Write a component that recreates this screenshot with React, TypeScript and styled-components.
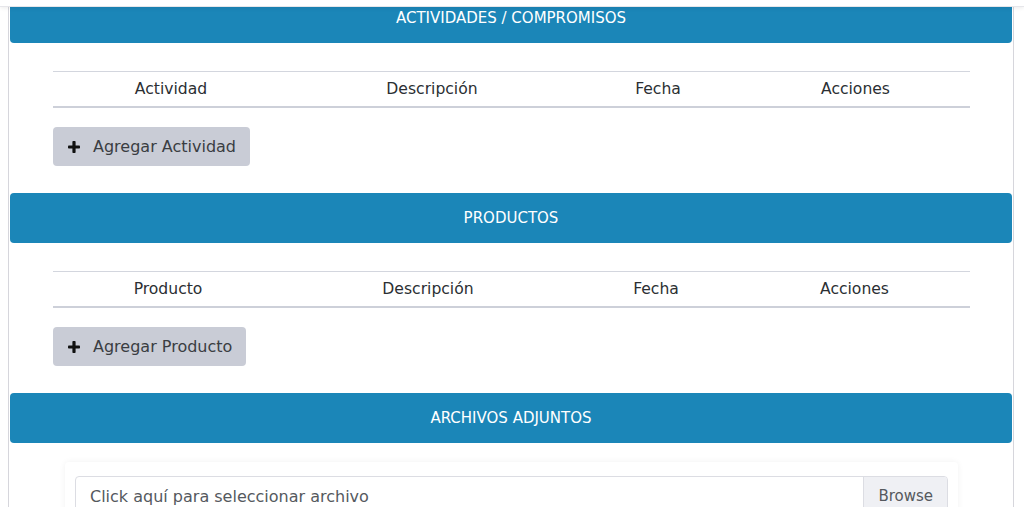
import styled, { createGlobalStyle } from "styled-components";

const GlobalStyle = createGlobalStyle`
  html, body {
    margin: 0;
    padding: 0;
    background: #ffffff;
    font-family: "DejaVu Sans", "Open Sans", sans-serif;
    overflow: hidden;
  }
`;

interface IColumn {
  label: string;
  width: number;
}

interface ISection {
  title: string;
  columns?: IColumn[];
  action?: string;
}

const sections: ISection[] = [
  {
    title: "ACTIVIDADES / COMPROMISOS",
    columns: [
      { label: "Actividad", width: 236 },
      { label: "Descripción", width: 286 },
      { label: "Fecha", width: 166 },
      { label: "Acciones", width: 229 },
    ],
    action: "Agregar Actividad",
  },
  {
    title: "PRODUCTOS",
    columns: [
      { label: "Producto", width: 230 },
      { label: "Descripción", width: 290 },
      { label: "Fecha", width: 166 },
      { label: "Acciones", width: 231 },
    ],
    action: "Agregar Producto",
  },
  { title: "ARCHIVOS ADJUNTOS" },
];

const PlusIcon = () => (
  <svg width="12" height="12" viewBox="0 0 12 12" fill="#111">
    <rect x="4.4" y="0" width="3.2" height="12" rx="0.8" />
    <rect x="0" y="4.4" width="12" height="3.2" rx="0.8" />
  </svg>
);

export default function App() {
  return (
    <>
      <GlobalStyle />
      <TopBar />
      <Page>
        <Card>
          {sections.map((s) => (
            <Section key={s.title}>
              <SectionHeader>{s.title}</SectionHeader>
              {s.columns ? (
                <SectionBody>
                  <TableHead $cols={s.columns.map((c) => `${c.width}px`).join(" ")}>
                    {s.columns.map((c) => (
                      <HeadCell key={c.label}>{c.label}</HeadCell>
                    ))}
                  </TableHead>
                  <AddButton>
                    <PlusIcon />
                    <span>{s.action}</span>
                  </AddButton>
                </SectionBody>
              ) : (
                <FileBody>
                  <FileWrap>
                    <FileInput>
                      <FilePlaceholder>Click aquí para seleccionar archivo</FilePlaceholder>
                      <BrowseButton>Browse</BrowseButton>
                    </FileInput>
                  </FileWrap>
                </FileBody>
              )}
            </Section>
          ))}
        </Card>
      </Page>
    </>
  );
}

const TopBar = styled.div`
  position: fixed;
  top: 0;
  left: 0;
  right: 0;
  height: 6px;
  background: #ffffff;
  border-bottom: 1px solid #e6e6ea;
  box-shadow: 0 1px 4px rgba(0, 0, 0, 0.08);
  z-index: 10;
`;

const Page = styled.div`
  margin-top: -7px;
  padding-left: 8px;
  width: 1006px;
`;

const Card = styled.div`
  border: 1px solid #d6d6dc;
  border-top: none;
  padding: 0 1px;
  min-height: 560px;
`;

const Section = styled.section`
  display: flex;
  flex-direction: column;
`;

const SectionHeader = styled.div`
  height: 50px;
  padding-bottom: 1px;
  box-sizing: border-box;
  display: flex;
  align-items: center;
  justify-content: center;
  background: #1b86b8;
  color: #ffffff;
  font-size: 15px;
  border-radius: 4px;
`;

const SectionBody = styled.div`
  padding: 28px 42px 27px 43px;
  display: flex;
  flex-direction: column;
  align-items: flex-start;
  gap: 19px;
`;

const TableHead = styled.div<{ $cols: string }>`
  display: grid;
  grid-template-columns: ${(p) => p.$cols};
  width: 917px;
  height: 34px;
  border-top: 1px solid #d3d6de;
  border-bottom: 2px solid #cdd0d9;
`;

const HeadCell = styled.div`
  display: flex;
  align-items: center;
  justify-content: center;
  font-size: 15.6px;
  color: #2b2f33;
`;

const AddButton = styled.button`
  display: flex;
  align-items: center;
  gap: 13px;
  height: 39px;
  padding: 0 14px 1px 15px;
  background: #c9ccd6;
  border: none;
  border-radius: 4px;
  font-family: inherit;
  font-size: 16px;
  color: #3a3d42;
  svg {
    margin-top: 1px;
  }
`;

const FileBody = styled.div`
  padding: 19px 54px 0 55px;
`;

const FileWrap = styled.div`
  padding: 14px 10px 20px;
  box-shadow: 0 0 6px rgba(0, 0, 0, 0.06);
  border-radius: 4px;
`;

const FileInput = styled.div`
  display: flex;
  height: 38px;
  border: 1px solid #dcdde3;
  border-radius: 4px;
  overflow: hidden;
`;

const FilePlaceholder = styled.div`
  flex: 1;
  display: flex;
  align-items: center;
  padding-left: 14px;
  font-size: 16px;
  color: #55595e;
`;

const BrowseButton = styled.div`
  display: flex;
  align-items: center;
  padding: 0 14px;
  background: #eff0f4;
  border-left: 1px solid #dcdde3;
  font-size: 15px;
  color: #55595e;
`;
